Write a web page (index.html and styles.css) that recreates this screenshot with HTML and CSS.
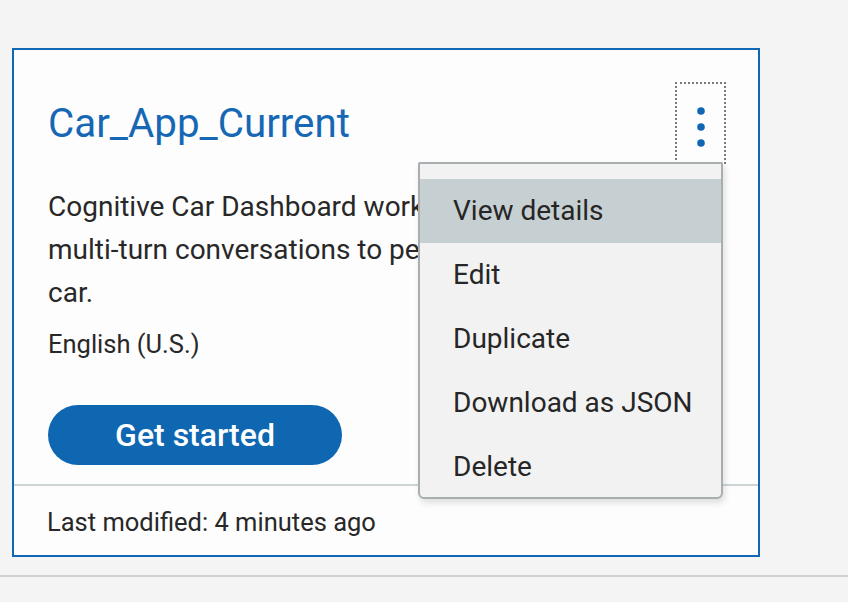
FILE: index.html
```html
<!DOCTYPE html>
<html lang="en">
<head>
<meta charset="utf-8">
<title>Car_App_Current</title>
<link rel="stylesheet" href="styles.css">
</head>
<body>
<main class="page">
  <section class="card">
    <div class="card-body">
      <div class="card-head">
        <h2 class="title">Car_App_Current</h2>
        <button class="overflow" aria-label="Open menu">
          <svg width="10" height="40" viewBox="0 0 10 40" aria-hidden="true">
            <circle cx="5" cy="4" r="3.8" fill="#1066b3"/>
            <circle cx="5" cy="20" r="3.8" fill="#1066b3"/>
            <circle cx="5" cy="36" r="3.8" fill="#1066b3"/>
          </svg>
        </button>
      </div>
      <p class="desc">Cognitive Car Dashboard workspace which allows<br>multi-turn conversations to perform tasks in the<br>car.</p>
      <p class="lang">English (U.S.)</p>
      <button class="cta">Get started</button>
    </div>
    <footer class="card-foot">Last modified: 4 minutes ago</footer>
    <ul class="menu">
      <li class="menu-item active">View details</li>
      <li class="menu-item">Edit</li>
      <li class="menu-item">Duplicate</li>
      <li class="menu-item">Download as JSON</li>
      <li class="menu-item">Delete</li>
    </ul>
  </section>
  <div class="rule"></div>
</main>
</body>
</html>
```

FILE: styles.css
```css
html, body {
  margin: 0;
  padding: 0;
  background: #f4f4f4;
  font-family: Roboto, "Liberation Sans", sans-serif;
  color: #282828;
}

.page {
  padding-top: 48px;
  width: 848px;
  height: 602px;
  box-sizing: border-box;
}

.card {
  position: relative;
  margin-left: 12px;
  width: 748px;
  box-sizing: border-box;
  border: 2px solid #1068b4;
  background: #fdfdfd;
}

.card-body {
  height: 434px;
  box-sizing: border-box;
  padding: 32px 32px 0 34px;
}

.card-head {
  display: flex;
  justify-content: space-between;
  align-items: flex-start;
}

.title {
  margin: 18px 0 0 0;
  font-size: 40.3px;
  line-height: 48px;
  font-weight: 400;
  color: #1668b5;
  letter-spacing: 0;
}

.overflow {
  width: 51px;
  height: 82px;
  margin: 0;
  padding: 23px 0 0 0;
  border: 2px dotted #7a7a7a;
  background: transparent;
  display: flex;
  justify-content: center;
  align-items: flex-start;
  box-sizing: border-box;
}

.desc {
  margin: 21px 0 0 0;
  font-size: 28px;
  line-height: 43px;
}

.lang {
  margin: 14px 0 0 0;
  font-size: 25.5px;
  line-height: 32px;
}

.cta {
  margin-top: 45px;
  width: 294px;
  height: 60px;
  border: none;
  border-radius: 30px;
  background: #0f67b2;
  color: #ffffff;
  font-family: Roboto, "Liberation Sans", sans-serif;
  font-size: 32px;
  font-weight: 500;
  padding: 0;
}

.card-foot {
  border-top: 2px solid #ccd4d6;
  height: 71px;
  box-sizing: border-box;
  padding: 20px 0 0 33px;
  font-size: 25.5px;
  line-height: 32px;
}

.menu {
  position: absolute;
  left: 404px;
  top: 112px;
  width: 305px;
  margin: 0;
  padding: 15px 0 0 0;
  list-style: none;
  box-sizing: border-box;
  height: 337px;
  background: #f2f2f2;
  border: 2px solid #a9aeb1;
  border-radius: 2px 2px 6px 6px;
  box-shadow: 2px 4px 6px rgba(0, 0, 0, 0.12);
}

.menu-item {
  height: 64px;
  line-height: 64px;
  padding-left: 33px;
  font-size: 28px;
  color: #262626;
}

.menu-item.active {
  background: #c6cfd1;
}

.rule {
  margin-top: 18px;
  height: 2px;
  background: #cdd3d5;
}
```
